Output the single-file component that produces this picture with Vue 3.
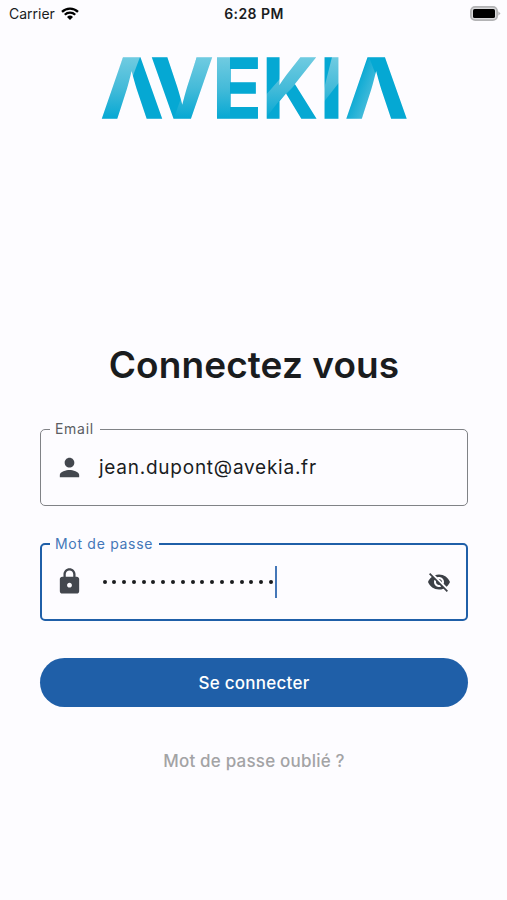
<template>
  <div class="screen">
    <header class="status-bar">
      <div class="status-left">
        <span>Carrier</span>
        <svg class="wifi" viewBox="0 0 18 13">
          <path d="M1 4.9a11.4 11.4 0 0 1 16 0" />
          <path d="M3.8 7.7a7.4 7.4 0 0 1 10.4 0" />
          <path class="wifi-dot" d="M6 10a4.3 4.3 0 0 1 6 0l-3 3z" />
        </svg>
      </div>
      <div class="status-time">6:28 PM</div>
      <div class="status-right">
        <svg class="battery" viewBox="0 0 31 15">
          <rect x="0.9" y="0.9" width="26.2" height="13.2" rx="4.2" fill="#d9d9db" stroke="#b3b3b5" stroke-width="1.8" />
          <rect x="3" y="3" width="22" height="9" rx="1.6" fill="#000" />
          <path d="M28.3 5.2l2.2 2.3-2.2 2.3z" fill="#b3b3b5" />
        </svg>
      </div>
    </header>

    <svg class="logo" viewBox="0 0 306 64" role="img" aria-label="Avekia">
      <defs>
        <linearGradient id="fade" x1="0" y1="0" x2="0" y2="62" gradientUnits="userSpaceOnUse">
          <stop offset="0" stop-color="#70cbe1" />
          <stop offset="0.5" stop-color="#45bbd9" />
          <stop offset="1" stop-color="#05a8d3" />
        </linearGradient>
        <linearGradient id="fade-side" x1="252" y1="32" x2="275" y2="41" gradientUnits="userSpaceOnUse">
          <stop offset="0" stop-color="#05a8d3" />
          <stop offset="1" stop-color="#55c0dc" />
        </linearGradient>
        <pattern
          v-for="(letter, i) in letters"
          :id="'facet-' + i"
          :key="i"
          x="-5" y="-5" width="320" height="75"
          viewBox="-5 -5 320 75"
          patternUnits="userSpaceOnUse"
        >
          <rect x="-5" y="-5" width="320" height="75" fill="#05a8d3" />
          <polygon :points="letter.facet" :fill="letter.side ? 'url(#fade-side)' : 'url(#fade)'" />
        </pattern>
      </defs>
      <text
        v-for="(letter, i) in letters"
        :key="i"
        :x="letter.x"
        y="61.2"
        :textLength="letter.width"
        lengthAdjust="spacingAndGlyphs"
        :fill="`url(#facet-${i})`"
        :stroke="`url(#facet-${i})`"
      >{{ letter.char }}</text>
    </svg>

    <main class="login">
      <h1 class="title">Connectez vous</h1>

      <fieldset class="field">
        <legend>Email</legend>
        <div class="field-row">
          <svg class="field-icon" viewBox="0 0 24 24">
            <path d="M12 12c2.21 0 4-1.79 4-4s-1.79-4-4-4-4 1.79-4 4 1.79 4 4 4zm0 2c-2.67 0-8 1.34-8 4v2h16v-2c0-2.66-5.33-4-8-4z" />
          </svg>
          <span class="value">{{ email }}</span>
        </div>
      </fieldset>

      <fieldset class="field focused">
        <legend>Mot de passe</legend>
        <div class="field-row">
          <svg class="field-icon" viewBox="0 0 24 24">
            <path d="M18 8h-1V6c0-2.76-2.24-5-5-5S7 3.24 7 6v2H6c-1.1 0-2 .9-2 2v10c0 1.1.9 2 2 2h12c1.1 0 2-.9 2-2V10c0-1.1-.9-2-2-2zm-6 9c-1.1 0-2-.9-2-2s.9-2 2-2 2 .9 2 2-.9 2-2 2zm3.1-9H8.9V6c0-1.71 1.39-3.1 3.1-3.1s3.1 1.39 3.1 3.1v2z" />
          </svg>
          <span class="dots">
            <i v-for="n in passwordLength" :key="n"></i>
          </span>
          <span class="caret"></span>
          <svg class="toggle" viewBox="0 0 24 24">
            <path d="M12 7c2.76 0 5 2.24 5 5 0 .65-.13 1.26-.36 1.83l2.92 2.92c1.51-1.26 2.7-2.89 3.43-4.75-1.73-4.39-6-7.5-11-7.5-1.4 0-2.74.25-3.98.7l2.16 2.16C10.74 7.13 11.35 7 12 7zM2 4.27l2.28 2.28.46.46C3.08 8.3 1.78 10.02 1 12c1.73 4.39 6 7.5 11 7.5 1.55 0 3.03-.3 4.38-.84l.42.42L19.73 22 21 20.73 3.27 3 2 4.27zM7.53 9.8l1.55 1.55c-.05.21-.08.43-.08.65 0 1.66 1.34 3 3 3 .22 0 .44-.03.65-.08l1.55 1.55c-.67.33-1.41.53-2.2.53-2.76 0-5-2.24-5-5 0-.79.2-1.53.53-2.2zm4.31-.78l3.15 3.15.02-.16c0-1.66-1.34-3-3-3l-.17.01z" />
          </svg>
        </div>
      </fieldset>

      <button class="submit" type="button">Se connecter</button>
      <a class="forgot">Mot de passe oublié ?</a>
    </main>
  </div>
</template>

<script setup>
import { ref } from 'vue'

const email = ref('jean.dupont@avekia.fr')
const passwordLength = ref(18)

// each letter carries the lighter facet painted over one of its strokes
const letters = [
  { char: 'Λ', x: 0, width: 62, facet: '22,0 39,0 15,64 -3,64' },
  { char: 'V', x: 50, width: 62, facet: '96,0 113,0 90,64 72,64 79,44' },
  { char: 'E', x: 111.5, width: 49, facet: '110,0 129,0 129,64 110,64' },
  { char: 'K', x: 161.5, width: 54.5, facet: '198,0 218,0 191,31 178,44 164,62 164,39' },
  { char: 'I', x: 219, width: 23, facet: '231,0 240,0 240,23 222,46 222,36' },
  { char: 'Λ', x: 244.5, width: 62, facet: '268,0 276,21 260,64 242,64', side: true }
]
</script>

<style>
body {
  margin: 0;
  background: #fdfcff;
}
</style>

<style scoped>
.screen {
  display: flex;
  flex-direction: column;
  height: 900px;
  background: #fdfcff;
  font-family: Inter, "Liberation Sans", sans-serif;
  color: #1a1c1e;
}

.status-bar {
  display: grid;
  grid-template-columns: 1fr auto 1fr;
  align-items: center;
  height: 27px;
  padding: 0 6px 0 9px;
  font-size: 14px;
}

.status-left {
  display: flex;
  align-items: center;
  gap: 6px;
}

.status-time {
  margin-right: 2px;
  font-weight: 600;
  font-size: 14px;
  letter-spacing: 0.45px;
}

.status-right {
  display: flex;
  justify-content: flex-end;
}

.wifi {
  width: 18px;
  height: 13px;
  margin-top: -1px;
  fill: none;
  stroke: #000;
  stroke-width: 2.3;
}

.wifi .wifi-dot {
  fill: #000;
  stroke: none;
}

.battery {
  width: 31px;
  height: 15px;
}

.logo {
  width: 306px;
  height: 64px;
  margin: 30px 0 0 101px;
  overflow: visible;
}

.logo text {
  font-family: Inter, sans-serif;
  font-size: 82.5px;
  font-weight: 700;
  stroke-width: 1.7px;
}

.login {
  display: flex;
  flex-direction: column;
  padding: 0 39px 0 40px;
}

.title {
  margin: 221px 0 0;
  font-size: 37px;
  line-height: 46px;
  font-weight: 600;
  letter-spacing: 0.1px;
  text-align: center;
}

.field {
  box-sizing: border-box;
  height: 86px;
  min-width: 0;
  margin: 32px 0 0;
  padding: 0 15px 0 14px;
  border: 1px solid #808286;
  border-radius: 5px;
}

.field legend {
  height: 18px;
  margin-left: -5px;
  padding: 0 6px 0 5px;
  font-size: 14px;
  line-height: 18px;
  letter-spacing: 0.7px;
  color: #5b5d62;
}

.field-row {
  display: flex;
  align-items: center;
  height: 59px;
}

.focused {
  margin-top: 29px;
  padding-left: 13px;
  border: 2px solid #1f5fa8;
}

.focused .field-row {
  height: 57px;
}

.focused legend {
  color: #4477b8;
}

.field-icon {
  width: 29px;
  height: 29px;
  fill: #43474e;
}

.value {
  margin-left: 15px;
  font-size: 19px;
  line-height: 24px;
  letter-spacing: 0.75px;
}

.dots {
  display: flex;
  gap: 5.8px;
  margin-left: 18.5px;
}

.dots i {
  width: 4px;
  height: 4px;
  border-radius: 50%;
  background: #1a1c1e;
}

.caret {
  width: 2px;
  height: 32px;
  margin-left: 2px;
  background: #4477b8;
}

.toggle {
  width: 24px;
  height: 24px;
  margin-left: auto;
  fill: #3c4046;
}

.submit {
  height: 49px;
  margin-top: 37px;
  border: 0;
  border-radius: 25px;
  background: #1f5fa8;
  color: #fff;
  font-family: inherit;
  font-size: 17px;
  font-weight: 500;
  letter-spacing: 0.25px;
}

.forgot {
  margin-top: 44px;
  font-size: 17px;
  line-height: 21px;
  font-weight: 500;
  letter-spacing: 0.2px;
  text-align: center;
  color: #a3a3a5;
}
</style>
